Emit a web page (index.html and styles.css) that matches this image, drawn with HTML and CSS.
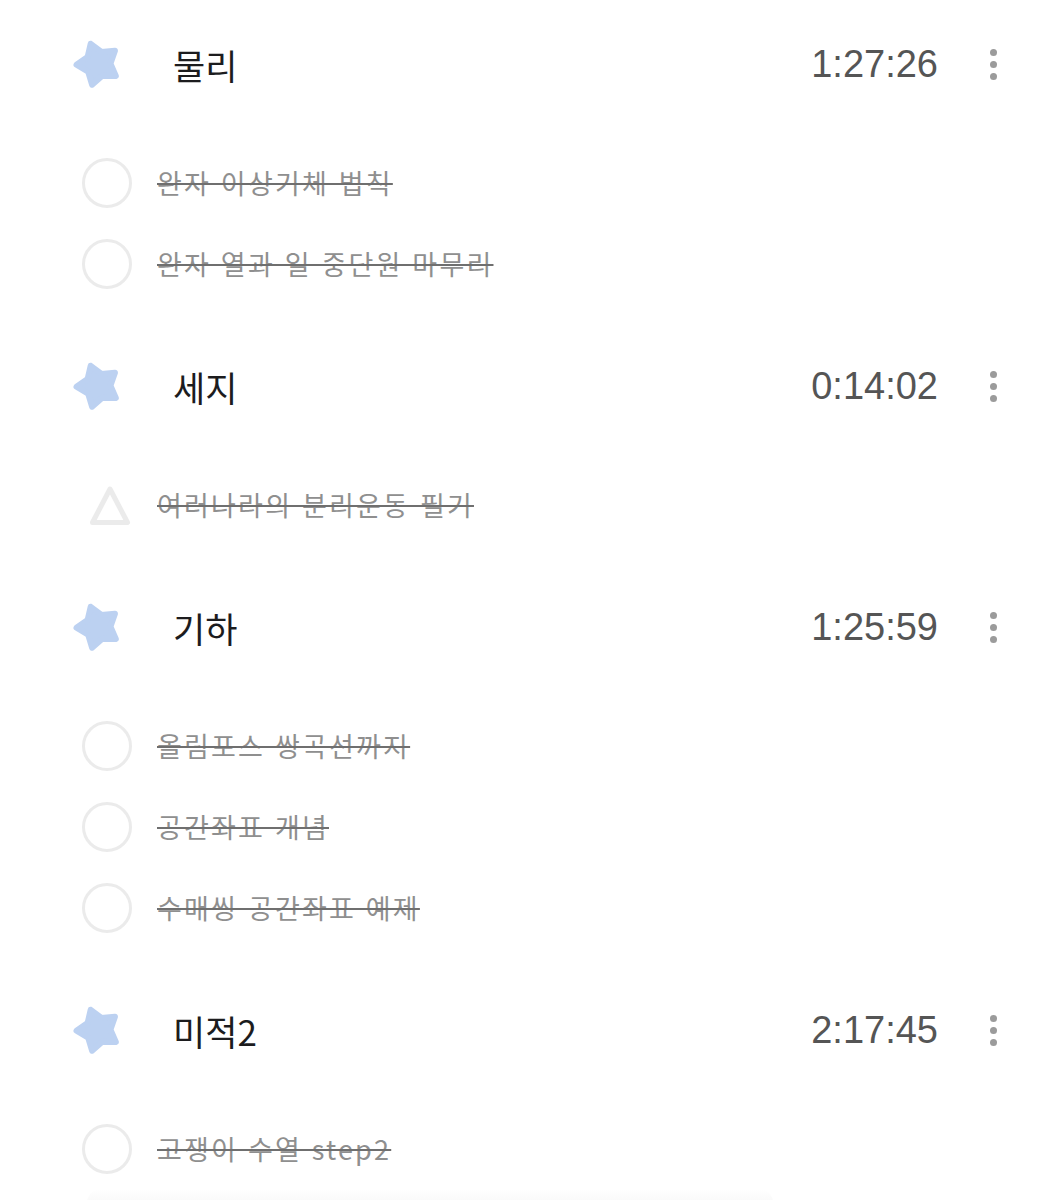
FILE: index.html
```html
<!DOCTYPE html>
<html lang="ko">
<head>
    <meta charset="UTF-8">
    <meta name="viewport" content="width=device-width, initial-scale=1.0">
    <title>과목별 기록</title>
    <link rel="stylesheet" href="styles.css">
</head>
<body>

<div class="subjects">

    <section class="subject">
        <div class="subject-head">
            <svg class="star" viewBox="0 0 52 52"><polygon points="18.65,5.80 29.45,13.98 42.94,12.76 38.49,25.56 43.82,38.02 30.28,37.75 20.07,46.67 16.15,33.70 4.51,26.75 15.64,19.01"/></svg>
            <span class="subject-name">물리</span>
            <span class="subject-time">1:27:26</span>
            <span class="more"><i></i><i></i><i></i></span>
        </div>
        <ul class="tasks">
            <li class="task"><span class="mark circle"></span><s>완자 이상기체 법칙</s></li>
            <li class="task"><span class="mark circle"></span><s>완자 열과 일 중단원 마무리</s></li>
        </ul>
    </section>

    <section class="subject">
        <div class="subject-head">
            <svg class="star" viewBox="0 0 52 52"><polygon points="18.65,5.80 29.45,13.98 42.94,12.76 38.49,25.56 43.82,38.02 30.28,37.75 20.07,46.67 16.15,33.70 4.51,26.75 15.64,19.01"/></svg>
            <span class="subject-name">세지</span>
            <span class="subject-time">0:14:02</span>
            <span class="more"><i></i><i></i><i></i></span>
        </div>
        <ul class="tasks">
            <li class="task">
                <svg class="mark" viewBox="0 0 50 50"><polygon class="tri" points="28,9 45.5,42.5 10.5,42.5"/></svg>
                <s>여러나라의 분리운동 필기</s>
            </li>
        </ul>
    </section>

    <section class="subject">
        <div class="subject-head">
            <svg class="star" viewBox="0 0 52 52"><polygon points="18.65,5.80 29.45,13.98 42.94,12.76 38.49,25.56 43.82,38.02 30.28,37.75 20.07,46.67 16.15,33.70 4.51,26.75 15.64,19.01"/></svg>
            <span class="subject-name">기하</span>
            <span class="subject-time">1:25:59</span>
            <span class="more"><i></i><i></i><i></i></span>
        </div>
        <ul class="tasks">
            <li class="task"><span class="mark circle"></span><s>올림포스 쌍곡선까지</s></li>
            <li class="task"><span class="mark circle"></span><s>공간좌표 개념</s></li>
            <li class="task"><span class="mark circle"></span><s>수매씽 공간좌표 예제</s></li>
        </ul>
    </section>

    <section class="subject">
        <div class="subject-head">
            <svg class="star" viewBox="0 0 52 52"><polygon points="18.65,5.80 29.45,13.98 42.94,12.76 38.49,25.56 43.82,38.02 30.28,37.75 20.07,46.67 16.15,33.70 4.51,26.75 15.64,19.01"/></svg>
            <span class="subject-name">미적2</span>
            <span class="subject-time">2:17:45</span>
            <span class="more"><i></i><i></i><i></i></span>
        </div>
        <ul class="tasks">
            <li class="task"><span class="mark circle"></span><s>고쟁이 수열 step2</s></li>
        </ul>
        <div class="fade-bar"></div>
    </section>

</div>

</body>
</html>
```

FILE: styles.css
```css
body {
    margin: 0;
    background-color: #ffffff;
    font-family: 'Noto Sans CJK KR', 'Noto Sans', sans-serif;
}
.subjects {
    padding-top: 24px;
}
.subject {
    padding-bottom: 42px;
}
.subject-head {
    display: flex;
    align-items: center;
    height: 80px;
    padding-left: 72px;
    padding-right: 45px;
}
.star {
    width: 52px;
    height: 52px;
    flex-shrink: 0;
}
.star polygon {
    fill: #bcd1f1;
    stroke: #bcd1f1;
    stroke-width: 6;
    stroke-linejoin: round;
}
.subject-name {
    margin-left: 49px;
    flex: 1;
    font-size: 35px;
    color: #1c1c1e;
}
.subject-time {
    font-family: 'Liberation Sans', Arial, sans-serif;
    font-size: 38px;
    color: #555555;
    margin-right: 45px;
}
.more {
    width: 20px;
    display: flex;
    flex-direction: column;
    align-items: center;
    gap: 5px;
}
.more i {
    width: 7px;
    height: 7px;
    border-radius: 50%;
    background-color: #9b9b9b;
}
.tasks {
    list-style: none;
    margin: 38px 0 0;
    padding: 0;
}
.task {
    display: flex;
    align-items: center;
    height: 81px;
    padding-left: 82px;
}
.mark {
    width: 50px;
    height: 50px;
    flex-shrink: 0;
    box-sizing: border-box;
    margin-right: 25px;
}
.circle {
    border: 3.5px solid #ebebeb;
    border-radius: 50%;
}
.tri {
    fill: none;
    stroke: #ebebeb;
    stroke-width: 5;
    stroke-linejoin: round;
}
.task s {
    font-size: 27px;
    letter-spacing: 2.2px;
    color: #8f8f8f;
    text-decoration-color: #6f6f6f;
    text-decoration-thickness: 2px;
}
.fade-bar {
    margin: 0 275px 0 87px;
    height: 14px;
    background: linear-gradient(#ffffff, #f9f9f9);
    border-radius: 20px 20px 0 0;
}
```
